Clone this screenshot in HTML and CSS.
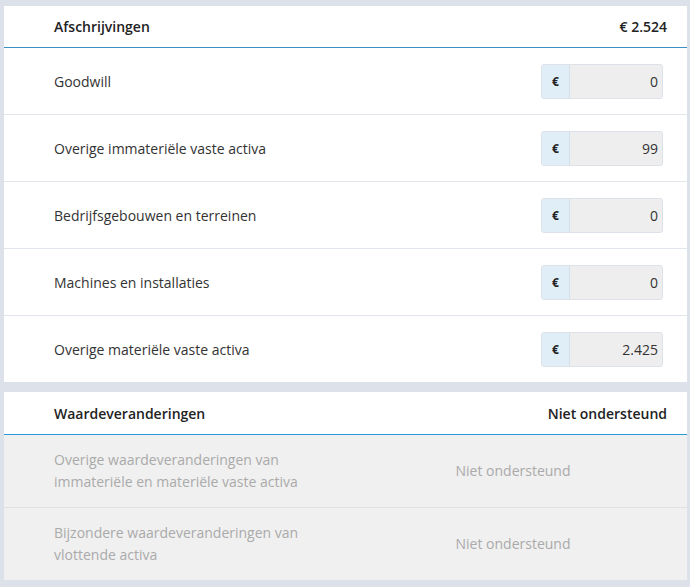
FILE: index.html
```html
<!DOCTYPE html>
<html lang="nl">
<head>
<meta charset="utf-8">
<link rel="stylesheet" href="styles.css">
</head>
<body>
<section class="card">
  <div class="card-head">
    <span>Afschrijvingen</span>
    <span>€ 2.524</span>
  </div>
  <div class="row">
    <span class="label">Goodwill</span>
    <div class="field"><span class="prefix">€</span><span class="value">0</span></div>
  </div>
  <div class="row">
    <span class="label">Overige immateriële vaste activa</span>
    <div class="field"><span class="prefix">€</span><span class="value">99</span></div>
  </div>
  <div class="row">
    <span class="label">Bedrijfsgebouwen en terreinen</span>
    <div class="field"><span class="prefix">€</span><span class="value">0</span></div>
  </div>
  <div class="row">
    <span class="label">Machines en installaties</span>
    <div class="field"><span class="prefix">€</span><span class="value">0</span></div>
  </div>
  <div class="row">
    <span class="label">Overige materiële vaste activa</span>
    <div class="field"><span class="prefix">€</span><span class="value">2.425</span></div>
  </div>
</section>
<section class="card card-second">
  <div class="card-head head-bright">
    <span>Waardeveranderingen</span>
    <span>Niet ondersteund</span>
  </div>
  <div class="row-off">
    <span class="label-off">Overige waardeveranderingen van immateriële en materiële vaste activa</span>
    <span class="value-off">Niet ondersteund</span>
  </div>
  <div class="row-off">
    <span class="label-off">Bijzondere waardeveranderingen van vlottende activa</span>
    <span class="value-off">Niet ondersteund</span>
  </div>
</section>
</body>
</html>
```
FILE: styles.css
```css
html, body {
  margin: 0;
  padding: 0;
}
body {
  background: #dde1e9;
  font-family: "Open Sans", "Liberation Sans", sans-serif;
  font-size: 14px;
  color: #333;
  padding: 6px 3px 7px 4px;
}
.card {
  background: #fff;
}
.card-second {
  margin-top: 10px;
  background: #f0f0f0;
}
.card-head {
  height: 41px;
  display: flex;
  align-items: center;
  justify-content: space-between;
  padding: 0 20px 0 50px;
  border-bottom: 1px solid #3a8fc7;
  font-weight: 600;
  color: #222;
  background: #fff;
}
.card-head.head-bright {
  height: 42px;
  border-bottom-color: #2b9ad9;
}
.row {
  height: 66px;
  display: flex;
  align-items: center;
  justify-content: space-between;
  padding: 0 24px 0 50px;
  border-bottom: 1px solid #e1e5ec;
}
.row:last-child {
  border-bottom: none;
}
.label {
  color: #333;
}
.field {
  display: flex;
  width: 122px;
  height: 35px;
  box-sizing: border-box;
  border: 1px solid #dde2e8;
  border-radius: 3px;
  background: #eeeeee;
  overflow: hidden;
}
.prefix {
  width: 27px;
  flex: none;
  display: flex;
  align-items: center;
  justify-content: center;
  background: #e0eef7;
  border-right: 1px solid #d3e0ea;
  font-size: 12px;
  font-weight: 700;
  color: #222;
}
.value {
  flex: 1;
  display: flex;
  align-items: center;
  justify-content: flex-end;
  padding-right: 4px;
  color: #333;
}
.row-off {
  height: 72px;
  display: grid;
  grid-template-columns: 260px 1fr;
  column-gap: 45px;
  align-items: center;
  padding: 0 20px 0 50px;
  border-bottom: 1px solid #e2e2e4;
  color: #aaaaaa;
  line-height: 22px;
}
.row-off:last-child {
  border-bottom: none;
}
.value-off {
  text-align: center;
}
```
